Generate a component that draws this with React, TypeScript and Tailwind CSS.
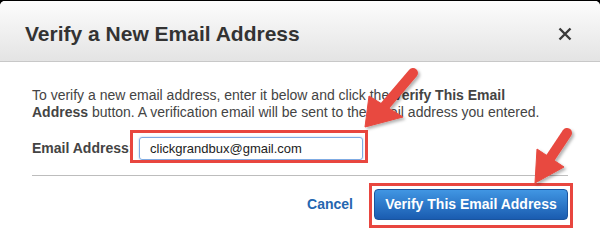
import React from 'react';

const Annotations = () => (
  <svg className="pointer-events-none absolute inset-0" width="600" height="240" viewBox="0 0 600 240">
    <defs>
      <filter id="shadow" x="-20%" y="-20%" width="140%" height="140%">
        <feDropShadow dx="2" dy="2" stdDeviation="1.5" floodColor="#000" floodOpacity="0.3" />
      </filter>
    </defs>
    <rect x="131.5" y="131.5" width="235" height="30" fill="none" stroke="#e8463f" strokeWidth="3" />
    <rect x="370.5" y="184.5" width="201" height="42" fill="none" stroke="#e8463f" strokeWidth="3" />
    <g filter="url(#shadow)" fill="#e8493f" stroke="#e8493f">
      <line x1="413" y1="73" x2="384" y2="107" strokeWidth="10" strokeLinecap="round" />
      <polygon points="369,96 403,117 365,127" strokeWidth="1" strokeLinejoin="round" />
      <line x1="567" y1="133" x2="549" y2="160" strokeWidth="10" strokeLinecap="round" />
      <polygon points="537,149 564,167 535,183" strokeWidth="1" strokeLinejoin="round" />
    </g>
  </svg>
);

export default function App() {
  return (
    <div className="relative h-[240px] w-[600px] overflow-hidden bg-black font-['Liberation_Sans',Arial,sans-serif]">
      <div className="mt-px flex h-[239px] flex-col overflow-hidden rounded-t-[5px] bg-white">
        <header className="flex h-[61px] items-center justify-between border-b border-[#c8c8c8] bg-gradient-to-b from-[#fcfcfc] to-[#e4e4e4] pt-[6px] pl-[25px] pr-[28px]">
          <h2 className="text-[21px] font-bold leading-[24px] text-[#333]">Verify a New Email Address</h2>
          <svg width="14" height="14" viewBox="0 0 14 14">
            <path d="M1.5 1.5 L12.5 12.5 M12.5 1.5 L1.5 12.5" stroke="#3a3a3a" strokeWidth="2.4" />
          </svg>
        </header>

        <div className="px-[32px] pt-[25px]">
          <p className="max-w-[522px] text-[14px] leading-[17px] text-[#444]">
            To verify a new email address, enter it below and click the <b>Verify This Email</b> <b>Address</b> button. A verification email will be sent to the email address you entered.
          </p>

          <div className="mt-[16px] flex items-center">
            <label className="w-[107px] shrink-0 text-[14px] font-bold text-[#444]">Email Address:</label>
            <div className="flex h-[23px] w-[224px] items-center rounded-[3px] border border-[#7fabe3] pl-[10px] text-[13px] text-[#222] shadow-[0_0_2px_rgba(82,150,230,0.5)]">
              clickgrandbux@gmail.com
            </div>
          </div>

          <div className="mt-[15px] h-px bg-[#bdbdbd]" />

          <div className="mt-[13px] flex items-center justify-end gap-[21px]">
            <button className="text-[14px] font-bold text-[#2466b0]">Cancel</button>
            <button className="h-[31px] w-[194px] rounded-[4px] border border-[#1a549e] bg-gradient-to-b from-[#4196e3] to-[#1a5cb0] text-[14px] font-bold text-white">
              Verify This Email Address
            </button>
          </div>
        </div>
      </div>
      <Annotations />
    </div>
  );
}
